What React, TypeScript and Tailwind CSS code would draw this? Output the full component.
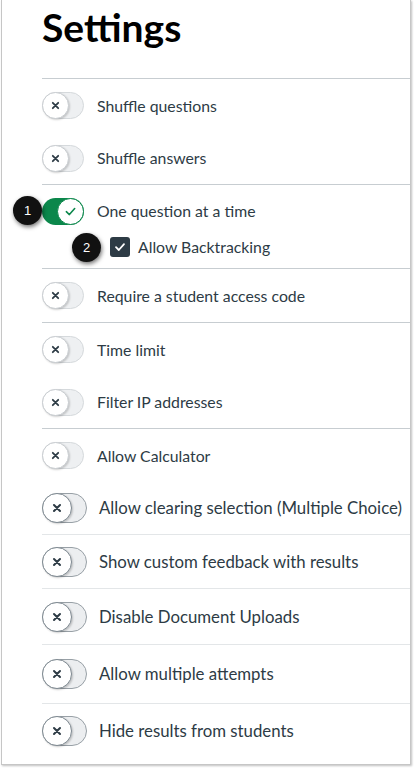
import React from "react";

const font = { fontFamily: "Lato, 'Noto Sans', sans-serif" };

function XIcon({ size = 9 }: { size?: number }) {
  return (
    <svg width={size} height={size} viewBox="0 0 10 10">
      <path d="M2 2 L8 8 M8 2 L2 8" stroke="#2d3b45" strokeWidth="2" strokeLinecap="round" />
    </svg>
  );
}

function SmallToggle() {
  return (
    <div className="relative w-[42px] h-[27px] rounded-full bg-[#eef0f2] border border-[#d5d9dc] shrink-0">
      <div className="absolute left-[-1px] top-[-1px] w-[27px] h-[27px] rounded-full bg-white border border-[#c9cdd1] shadow-[1px_1px_2px_rgba(0,0,0,0.18)] flex items-center justify-center">
        <XIcon />
      </div>
    </div>
  );
}

function LargeToggle() {
  return (
    <div className="relative w-[45px] h-[30px] rounded-full bg-[#eceef0] border border-[#98a0a6] shrink-0">
      <div className="absolute left-[-1px] top-[-1px] w-[30px] h-[30px] rounded-full bg-white border-[1.5px] border-[#7f8a92] shadow-[1px_1px_2px_rgba(0,0,0,0.2)] flex items-center justify-center">
        <XIcon size={10} />
      </div>
    </div>
  );
}

function OnToggle() {
  return (
    <div className="relative w-[42px] h-[27px] rounded-full bg-[#0b874b] shrink-0">
      <div className="absolute right-[0px] top-[0px] w-[27px] h-[27px] rounded-full bg-white border border-[#0b874b] flex items-center justify-center">
        <svg width="13" height="13" viewBox="0 0 14 14">
          <path d="M2.5 7.2 L5.8 10.3 L11.5 3.8" fill="none" stroke="#0b874b" strokeWidth="1.7" strokeLinecap="round" strokeLinejoin="round" />
        </svg>
      </div>
    </div>
  );
}

function Badge({ n, className }: { n: string; className: string }) {
  return (
    <div
      className={
        "absolute w-[29px] h-[29px] rounded-full bg-[#111111] text-white text-[13px] flex items-center justify-center shadow-[1px_2px_4px_rgba(0,0,0,0.55)] z-10 " +
        className
      }
      style={{ fontFamily: "Arial, 'Liberation Sans', sans-serif" }}
    >
      {n}
    </div>
  );
}

function Row({
  h,
  label,
  large,
}: {
  h: string;
  label: string;
  large?: boolean;
}) {
  return (
    <div className={"flex items-center " + h}>
      {large ? <LargeToggle /> : <SmallToggle />}
      <span
        className={
          large
            ? "ml-[12px] text-[16.8px] text-[#2d3b45]"
            : "ml-[13px] text-[15.8px] text-[#2d3b45]"
        }
      >
        {label}
      </span>
    </div>
  );
}

export default function App() {
  return (
    <div className="w-[418px] h-[771px] bg-white pl-[1px]" style={font}>
      <div className="w-[410px] h-[765px] border-l border-r border-b border-[#c6c6c6] shadow-[1px_1px_2px_rgba(0,0,0,0.25)] pl-[40px] bg-white">
        <div className="h-[78px] pt-[4px]">
          <h1 className="text-[39px] leading-[47px] font-bold text-black">Settings</h1>
        </div>
        <div className="border-t border-[#c7cdd1]">
          <Row h="h-[53px]" label="Shuffle questions" />
          <Row h="h-[52px]" label="Shuffle answers" />
        </div>
        <div className="border-t border-[#c7cdd1] pb-[11px]">
          <div className="relative flex items-center h-[52px]">
            <Badge n="1" className="left-[-29px] top-[11px]" />
            <OnToggle />
            <span className="ml-[13px] text-[15.8px] text-[#2d3b45]">One question at a time</span>
          </div>
          <div className="relative flex items-center h-[20px] pl-[68px]">
            <Badge n="2" className="left-[30px] top-[-4px]" />
            <div className="w-[20px] h-[20px] rounded-[3px] bg-[#2d3b45] flex items-center justify-center">
              <svg width="12" height="12" viewBox="0 0 12 12">
                <path d="M2 6.2 L4.8 9 L10 3.2" fill="none" stroke="white" strokeWidth="1.8" strokeLinecap="round" strokeLinejoin="round" />
              </svg>
            </div>
            <span className="ml-[8px] text-[15.8px] text-[#2d3b45]">Allow Backtracking</span>
          </div>
        </div>
        <div className="border-t border-[#c7cdd1]">
          <Row h="h-[53px]" label="Require a student access code" />
        </div>
        <div className="border-t border-[#c7cdd1]">
          <Row h="h-[53px]" label="Time limit" />
          <Row h="h-[52px]" label="Filter IP addresses" />
        </div>
        <div className="border-t border-[#c7cdd1]">
          <Row h="h-[53px]" label="Allow Calculator" />
          <Row h="h-[52px]" label="Allow clearing selection (Multiple Choice)" large />
        </div>
        <div className="border-t border-[#e3e6e8]">
          <Row h="h-[53px]" label="Show custom feedback with results" large />
        </div>
        <div className="border-t border-[#e3e6e8]">
          <Row h="h-[55px]" label="Disable Document Uploads" large />
        </div>
        <div className="border-t border-[#e3e6e8]">
          <Row h="h-[58px]" label="Allow multiple attempts" large />
        </div>
        <div className="border-t border-[#e3e6e8]">
          <Row h="h-[53px]" label="Hide results from students" large />
        </div>
      </div>
    </div>
  );
}
